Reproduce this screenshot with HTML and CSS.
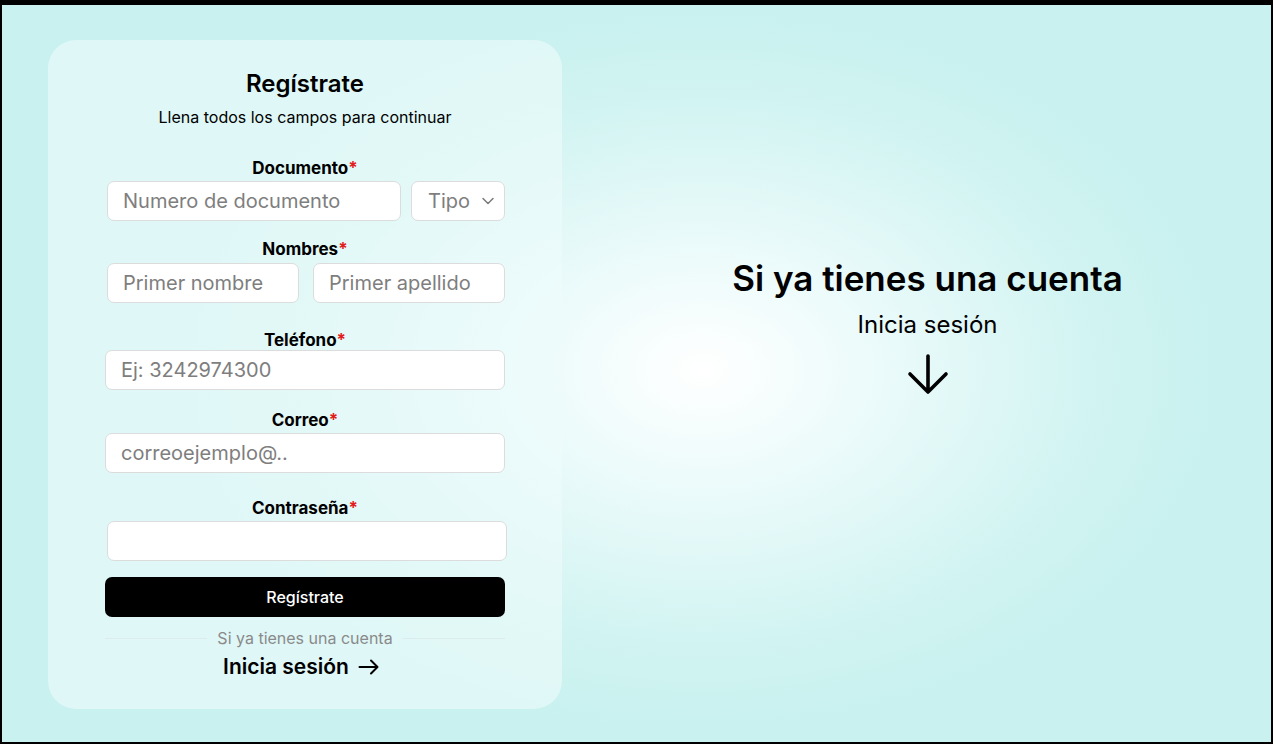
FILE: index.html
```html
<!DOCTYPE html>
<html lang="es">
<head>
<meta charset="utf-8">
<title>Regístrate</title>
<link rel="stylesheet" href="styles.css">
</head>
<body>
<div class="frame">
  <section class="card">
    <h1 class="title">Regístrate</h1>
    <p class="subtitle">Llena todos los campos para continuar</p>

    <div class="group g-doc">
      <label class="label">Documento<span class="req">*</span></label>
      <div class="row">
        <input class="input input-doc" type="text" placeholder="Numero de documento">
        <div class="select">
          <span>Tipo</span>
          <svg width="16" height="16" viewBox="0 0 16 16"><path d="M3 5.5l5 5 5-5" fill="none" stroke="#7a7a7a" stroke-width="1.5" stroke-linecap="round" stroke-linejoin="round"/></svg>
        </div>
      </div>
    </div>

    <div class="group g-names">
      <label class="label">Nombres<span class="req">*</span></label>
      <div class="row row-names">
        <input class="input input-first" type="text" placeholder="Primer nombre">
        <input class="input input-last" type="text" placeholder="Primer apellido">
      </div>
    </div>

    <div class="group g-phone">
      <label class="label">Teléfono<span class="req">*</span></label>
      <input class="input input-full" type="text" placeholder="Ej: 3242974300">
    </div>

    <div class="group g-mail">
      <label class="label">Correo<span class="req">*</span></label>
      <input class="input input-full" type="text" placeholder="correoejemplo@..">
    </div>

    <div class="group g-pass">
      <label class="label">Contraseña<span class="req">*</span></label>
      <input class="input input-full shift" type="password">
    </div>

    <button class="btn">Regístrate</button>

    <div class="divider"><span>Si ya tienes una cuenta</span></div>
    <a class="login-link" href="#">Inicia sesión
      <svg width="24" height="24" viewBox="0 0 24 24"><path d="M2.5 12h18M14 5.5L20.5 12 14 18.5" fill="none" stroke="#000" stroke-width="2" stroke-linecap="round" stroke-linejoin="round"/></svg>
    </a>
  </section>

  <section class="side">
    <h2 class="side-title">Si ya tienes una cuenta</h2>
    <p class="side-sub">Inicia sesión</p>
    <svg class="side-arrow" width="44" height="42" viewBox="0 0 44 42"><path d="M22 3v36M4 21l18 18 18-18" fill="none" stroke="#000" stroke-width="3.6" stroke-linecap="round" stroke-linejoin="round"/></svg>
  </section>
</div>
</body>
</html>
```

FILE: styles.css
```css
* { box-sizing: border-box; }
html, body { margin: 0; padding: 0; }
body {
  font-family: Inter, "Noto Sans", sans-serif;
  color: #000;
  background: #000;
}
.frame {
  width: 1273px;
  height: 744px;
  border-style: solid;
  border-color: #000;
  border-width: 5px 2px 2px 2px;
  background:
    radial-gradient(ellipse 620px 430px at 700px 365px, #ffffff 0%, #eafafa 30%, #d2f4f2 62%, #c8f1ef 85%);
  display: flex;
  align-items: flex-start;
  padding: 35px 0 0 46px;
}
.card {
  width: 514px;
  height: 669px;
  border-radius: 28px;
  background: rgba(238, 252, 252, 0.6);
  display: flex;
  flex-direction: column;
  align-items: center;
  padding: 29px 57px 0;
}
.title {
  margin: 0;
  font-size: 24px;
  font-weight: 600;
  line-height: 30px;
}
.subtitle {
  margin: 8px 0 0;
  font-size: 16px;
  line-height: 20px;
}
.group {
  width: 100%;
  display: flex;
  flex-direction: column;
  align-items: center;
}
.g-doc { margin-top: 31px; }
.g-names { margin-top: 18px; }
.g-phone { margin-top: 27px; }
.g-mail { margin-top: 20px; }
.g-pass { margin-top: 25px; }
.label {
  font-size: 17px;
  font-weight: 700;
  line-height: 20px;
}
.req { color: #e21b1b; }
.g-doc .label { margin-bottom: 3px; }
.g-names .label { margin-bottom: 4px; }
.g-mail .label, .g-pass .label { margin-bottom: 3px; }
.row {
  width: 100%;
  display: flex;
  justify-content: space-between;
}
.input {
  height: 40px;
  border: 1px solid #dcdcdc;
  border-radius: 7px;
  background: #fff;
  font-family: inherit;
  font-size: 20px;
  padding: 0 15px;
  outline: none;
}
.input::placeholder { color: #7e7e7e; }
.input-doc { width: 294px; margin-left: 2px; }
.select {
  width: 94px;
  height: 40px;
  border: 1px solid #dcdcdc;
  border-radius: 7px;
  background: #fff;
  display: flex;
  align-items: center;
  justify-content: space-between;
  padding: 0 8px 0 16px;
  font-size: 20px;
  color: #7e7e7e;
}
.input-first { width: 192px; margin-left: 2px; }
.input-last { width: 192px; }
.input-full { width: 100%; }
.shift { margin-left: 4px; }
.btn {
  margin-top: 16px;
  width: 100%;
  height: 40px;
  border: none;
  border-radius: 7px;
  background: #000;
  color: #fff;
  font-family: inherit;
  font-size: 16px;
  font-weight: 500;
}
.divider {
  margin-top: 11px;
  width: 100%;
  display: flex;
  align-items: center;
  gap: 10px;
  font-size: 16px;
  line-height: 20px;
  color: #8a8a8a;
}
.divider::before, .divider::after {
  content: "";
  flex: 1;
  height: 1px;
  background: #dcecec;
}
.login-link {
  margin-top: 7px;
  margin-right: 6px;
  display: flex;
  align-items: center;
  gap: 8px;
  color: #000;
  text-decoration: none;
  font-size: 21px;
  font-weight: 600;
  line-height: 24px;
}
.side {
  flex: 1;
  display: flex;
  flex-direction: column;
  align-items: center;
  padding: 216px 0 0 22px;
}
.side-title {
  margin: 0;
  font-size: 35px;
  font-weight: 600;
  line-height: 44px;
}
.side-sub {
  margin: 10px 0 0;
  font-size: 24px;
  line-height: 30px;
}
.side-arrow { margin-top: 13px; }
```
